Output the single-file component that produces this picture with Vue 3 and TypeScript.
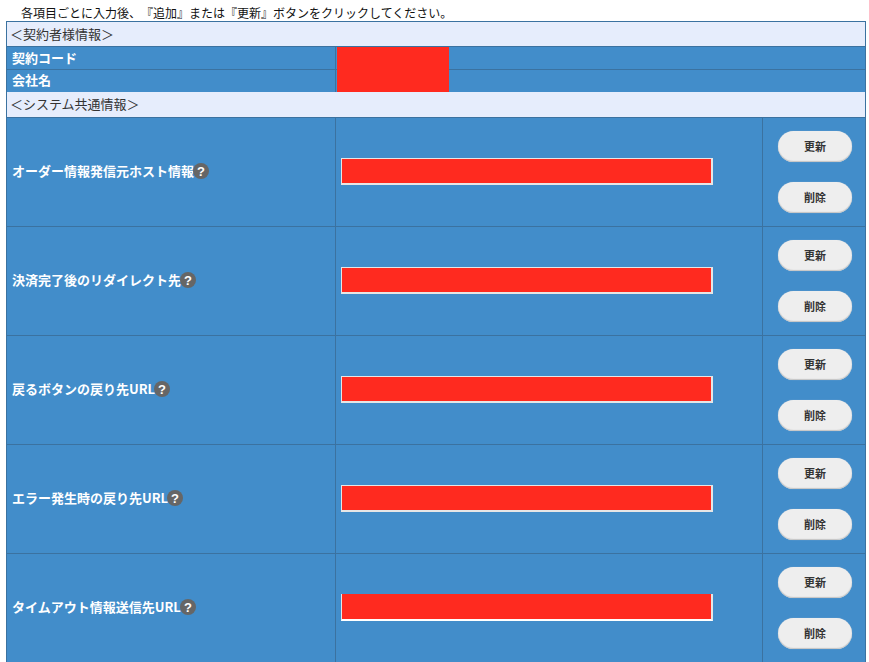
<script setup lang="ts">
const contractRows: string[] = ['契約コード', '会社名']
const systemRows: string[] = [
  'オーダー情報発信元ホスト情報',
  '決済完了後のリダイレクト先',
  '戻るボタンの戻り先URL',
  'エラー発生時の戻り先URL',
  'タイムアウト情報送信先URL',
]
</script>

<template>
  <div class="page">
    <p class="note">各項目ごとに入力後、『追加』または『更新』ボタンをクリックしてください。</p>
    <div class="table">
      <div class="section first">＜契約者様情報＞</div>
      <div v-for="(label, i) in contractRows" :key="label" class="info-row" :class="{ end: i === contractRows.length - 1 }">
        <div class="label info-label">{{ label }}</div>
        <div class="info-value"><div class="redacted"></div></div>
      </div>
      <div class="section">＜システム共通情報＞</div>
      <div v-for="(label, i) in systemRows" :key="label" class="sys-row">
        <div class="label sys-label">
          <span>{{ label }}</span>
          <svg class="help" viewBox="0 0 16 16" width="16" height="16" aria-hidden="true">
            <circle cx="8" cy="8" r="8" fill="#666" />
            <text x="8" y="12.5" text-anchor="middle" class="help-mark">?</text>
          </svg>
        </div>
        <div class="sys-input">
          <div class="field" :class="{ last: i === systemRows.length - 1 }"></div>
        </div>
        <div class="sys-actions">
          <button type="button" class="btn">更新</button>
          <button type="button" class="btn">削除</button>
        </div>
      </div>
    </div>
  </div>
</template>

<style>
html, body { margin: 0; background: #fff; overflow: hidden; }
</style>

<style scoped>
.page {
  height: 662px;
  overflow: hidden;
  padding-left: 6px;
  font-family: "Noto Sans CJK JP", "Liberation Sans", sans-serif;
  text-spacing-trim: space-all;
}
.note {
  margin: 0;
  height: 21px;
  padding-left: 15px;
  font-size: 12px;
  line-height: 26px;
  color: #111;
  white-space: nowrap;
}
.table {
  width: 860px;
  box-sizing: border-box;
  border: 1px solid #3b72a0;
  border-bottom: 0;
  background: #428dca;
}
.section {
  background: #e6edfc;
  color: #333;
  font-size: 13px;
  height: 25px;
  line-height: 23px;
  padding-left: 3px;
  border-bottom: 1px solid #3b72a0;
}
.section.first {
  height: 24px;
}
.info-row {
  display: grid;
  grid-template-columns: 329px 1fr;
  height: 23px;
  box-sizing: border-box;
  border-bottom: 1px solid #3b72a0;
}
.info-row.end {
  height: 22px;
  border-bottom: 0;
}
.label {
  color: #fff;
  font-weight: 700;
  font-size: 13px;
  padding-left: 5px;
  border-right: 1px solid #3b72a0;
}
.info-label {
  line-height: 21px;
}
.end .info-label {
  line-height: 19px;
}
.info-value {
  padding-left: 1px;
}
.redacted {
  width: 112px;
  height: calc(100% + 1px);
  background: #ff2a1f;
}
.end .redacted {
  height: 100%;
}
.sys-row {
  display: grid;
  grid-template-columns: 329px 427px 1fr;
  height: 109px;
  box-sizing: border-box;
  border-bottom: 1px solid #3b72a0;
}
.sys-label {
  display: flex;
  align-items: center;
  padding-bottom: 4px;
}
.help {
  display: block;
  flex: none;
  margin: 1px 0 0 -1px;
}
.help-mark {
  fill: #fff;
  font-family: "Liberation Sans", sans-serif;
  font-size: 13px;
  font-weight: 700;
}
.sys-input {
  display: flex;
  align-items: center;
  padding-left: 5px;
  border-right: 1px solid #3b72a0;
}
.field {
  width: 372px;
  height: 27px;
  box-sizing: border-box;
  background: #ff2a1f;
  border: 1px solid #e6e6e6;
  border-bottom-width: 2px;
  border-right-width: 2px;
  margin-bottom: 1px;
}
.field.last {
  border-top: 0;
  border-bottom-color: #fff;
}
.sys-actions {
  display: flex;
  flex-direction: column;
  align-items: flex-start;
  gap: 20px;
  padding: 13px 0 0 15px;
}
.btn {
  width: 74px;
  height: 31px;
  padding: 0 0 2px;
  border: 0;
  border-radius: 16px;
  background: #eeeeee;
  box-shadow: inset 0 -1px 1px #c4c4c4, 0 0 1px #9fb9d0;
  color: #333;
  font-family: inherit;
  font-size: 11px;
  font-weight: 700;
}
</style>
